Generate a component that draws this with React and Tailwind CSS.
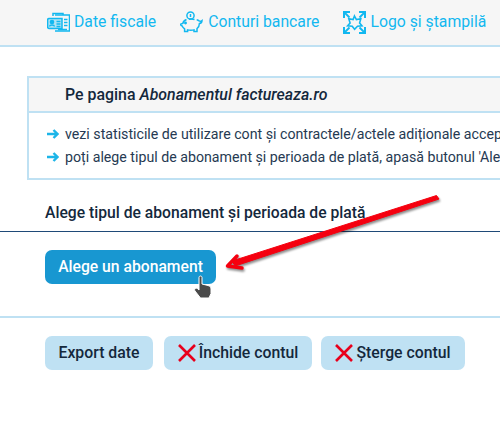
const FONT = "font-['Roboto',sans-serif]";

const IconDate = () => (
  <svg width="23" height="20" viewBox="0 0 23 20" fill="none" stroke="#12b8f0" strokeWidth="1.5" className="shrink-0">
    <path d="M6 4V1.5h10V3" />
    <path d="M8 3h14.5v16H8" />
    <path d="M2 6.5h13v10H2a1.4 1.4 0 0 1-1.4-1.4V7.9A1.4 1.4 0 0 1 2 6.5z" fill="#12b8f0" fillOpacity="0.3" />
    <circle cx="5" cy="10" r="1.6" fill="#12b8f0" />
    <path d="M2.5 14.5c.3-2 4.7-2 5 0" />
    <path d="M9.5 9.5h4M9.5 12h4M9.5 14.5h4M17 7.5h3.5M17 10.5h3.5M17 13.5h3.5M11 17.5h9" />
  </svg>
);

const IconPiggy = () => (
  <svg width="24" height="22" viewBox="0 0 24 22" fill="none" stroke="#12b8f0" strokeWidth="1.5" className="shrink-0">
    <circle cx="10.5" cy="4.5" r="3.6" />
    <path d="M10.5 3v3" />
    <path d="M6.5 8.5C4 9.5 3 11.5 2.8 12.5L.8 13c-.3 1 .3 1.6 1.2 1.8.6 1.4 1.6 2.3 2.6 3v2.6h3v-1.5c2.2.6 4.3.6 6.4 0v1.5h3v-2.8c1.6-1.2 2.4-3 2.4-5 1.6-.3 2.5-1.5 2.6-3-1 .7-2 .9-2.9.3-.6-.6-1.4-1-2.4-1.2" />
    <path d="M14.5 8.5c-2-.6-4-.6-5.5-.2" />
    <circle cx="5.5" cy="12" r=".7" fill="#12b8f0" />
  </svg>
);

const IconLogo = () => (
  <svg width="23" height="23" viewBox="0 0 23 23" fill="none" stroke="#12b8f0" className="shrink-0">
    <path d="M1 7V1h6M16 1h6v6M1 16v6h6M22 16v6h-6" strokeWidth="2" />
    <path d="M1.5 1.5l5 5M21.5 1.5l-5 5M1.5 21.5l5-5M21.5 21.5l-5-5" strokeWidth="1.8" />
    <path d="M11.5 5l1.9 3.6 4.4-.9-1.2 4.3 2.4 2.8-4.5.4-2.9 3.1-2.4-3.1-4.6-.4 2.5-2.8-1.3-4.3 4.3.9z" strokeWidth="1.6" />
  </svg>
);

const IconX = () => (
  <svg width="18" height="18" viewBox="0 0 18 18" stroke="#e8001c" strokeWidth="2.6" className="shrink-0">
    <path d="M1 1l16 16M17 1L1 17" />
  </svg>
);

const IconArrow = () => (
  <svg width="12" height="10" viewBox="0 0 12 10" fill="none" stroke="#1cb5e8" strokeWidth="2.4" className="shrink-0">
    <path d="M0 5h10M6.5 1l4 4-4 4" />
  </svg>
);

const NavItem = ({ icon, label }) => (
  <div className="flex items-center gap-[4px] text-[15.75px] text-[#12b8f0]">
    {icon}
    <span className="whitespace-nowrap">{label}</span>
  </div>
);

const App = () => {
  return (
    <div className={`${FONT} relative h-[439px] w-[500px] overflow-hidden bg-white text-[#14283c]`}>
      {/* Top nav */}
      <div className="flex h-[47px] items-center gap-[24px] border-b-2 border-[#bfe1f3] bg-[#f6f6f6] pl-[47px] pb-[1px]">
        <NavItem icon={<IconDate />} label="Date fiscale" />
        <NavItem icon={<IconPiggy />} label="Conturi bancare" />
        <NavItem icon={<IconLogo />} label="Logo și ștampilă" />
      </div>

      {/* Info box */}
      <div className="mt-[29px] ml-[27px] w-[520px] border-2 border-[#bfe1f3]">
        <div className="flex h-[35px] items-center border-b-2 border-[#bfe1f3] bg-[#f6f6f6] pl-[36px] text-[15.9px] font-medium">
          <span className="whitespace-nowrap">
            Pe pagina <em>Abonamentul factureaza.ro</em>
          </span>
        </div>
        <div className="flex h-[65px] flex-col justify-center gap-[2px] text-[14.2px] leading-[21px] text-[#263a52]">
          <div className="flex items-center gap-[6px] whitespace-nowrap pl-[18px]">
            <IconArrow />
            <span>vezi statisticile de utilizare cont și contractele/actele adiționale acceptate</span>
          </div>
          <div className="flex items-center gap-[6px] whitespace-nowrap pl-[18px]">
            <IconArrow />
            <span>poți alege tipul de abonament și perioada de plată, apasă butonul 'Alege un abonament'</span>
          </div>
        </div>
      </div>

      {/* Plan section */}
      <div className="mt-[22px] border-b border-[#1f4a78] pb-[8px] pl-[45px] text-[15.7px] font-medium leading-[21px]">
        Alege tipul de abonament și perioada de plată
      </div>
      <button className="mt-[18px] ml-[45px] flex h-[34px] w-[171px] items-center justify-center rounded-[7px] bg-[#1897d1] text-[15.7px] font-medium text-white">
        Alege un abonament
      </button>

      <div className="mt-[32px] h-[2px] bg-[#bfe1f3]" />

      {/* Account actions */}
      <div className="mt-[18px] flex pl-[45px] text-[15.8px] font-medium">
        <button className="flex h-[34px] w-[108px] items-center justify-center rounded-[7px] bg-[#bfe1f3]">
          Export date
        </button>
        <button className="ml-[11px] flex h-[34px] w-[148px] items-center justify-center gap-[3px] rounded-[7px] bg-[#bfe1f3]">
          <IconX />
          Închide contul
        </button>
        <button className="ml-[9px] flex h-[34px] w-[144px] items-center justify-center gap-[3px] rounded-[7px] bg-[#bfe1f3]">
          <IconX />
          Șterge contul
        </button>
      </div>

      {/* Annotation arrow */}
      <svg
        width="240"
        height="90"
        viewBox="0 0 240 90"
        className="absolute left-[215px] top-[190px] drop-shadow-[1px_2px_1px_rgba(0,0,0,0.45)]"
      >
        <path d="M221.5 5.5L224 9 20 76 17 71z" fill="#f5000f" strokeLinejoin="round" stroke="#f5000f" strokeWidth="1" />
        <path d="M22 66L12.5 76 27 78" fill="none" stroke="#f5000f" strokeWidth="3.5" strokeLinecap="round" strokeLinejoin="round" />
      </svg>

      {/* Hand cursor */}
      <svg width="20" height="24" viewBox="0 0 20 24" className="absolute left-[193px] top-[275px]">
        <path d="M6 2.5c0-2 3-2 3 0V9l6 1.5c2 .6 3 1.6 3 3.5v4.5L16 23H7.5L2 16c-1.3-2 1-3.6 2.6-2.3L6 15z" fill="#4a4a4a" stroke="#fff" strokeWidth="1" />
      </svg>
    </div>
  );
};

export default App;
